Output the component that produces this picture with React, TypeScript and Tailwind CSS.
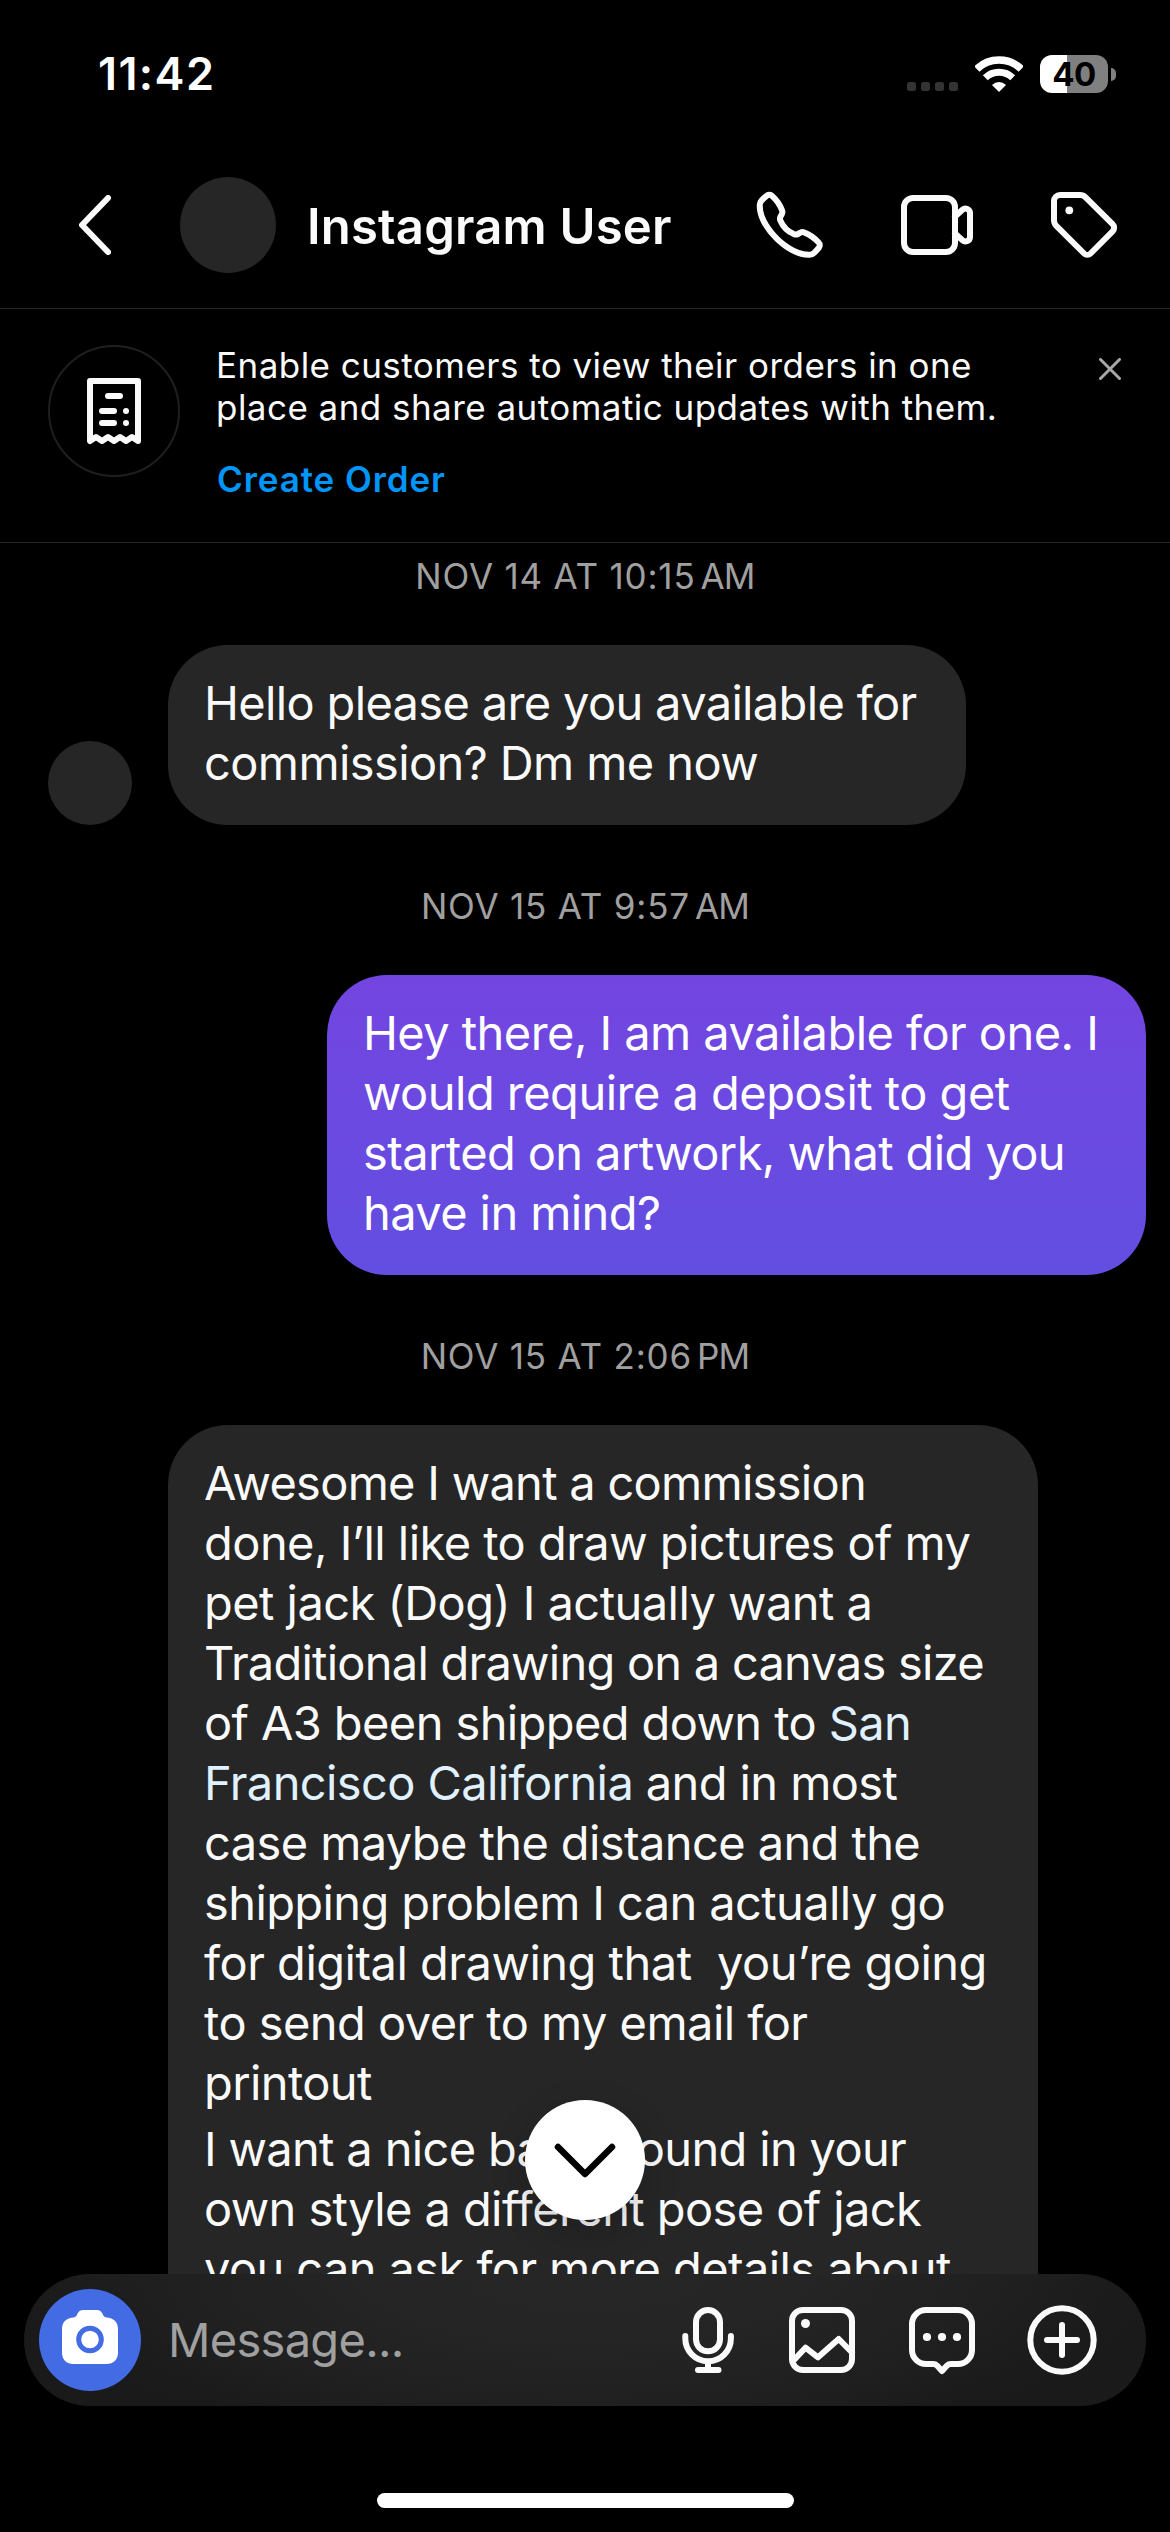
import type { ReactNode } from "react";

type IconProps = { className?: string; children: ReactNode };

function Icon({ className = "", children }: IconProps) {
  return (
    <svg
      viewBox="0 0 72 72"
      className={`h-[72px] w-[72px] shrink-0 ${className}`}
      fill="none"
      stroke="#fafafa"
      strokeWidth="6"
      strokeLinecap="round"
      strokeLinejoin="round"
    >
      {children}
    </svg>
  );
}

function StatusBar() {
  return (
    <div className="flex h-[148px] shrink-0 items-center justify-between pr-[54px] pl-[98px]">
      <span className="text-[45px] leading-[54px] font-semibold tracking-[1.4px] text-white">11:42</span>
      <div className="flex items-center">
        <div className="mt-[25px] mr-[17px] flex gap-[5px]">
          {[0, 1, 2, 3].map((i) => (
            <span key={i} className="h-[9px] w-[9px] rounded-[2.5px] bg-[#333333]" />
          ))}
        </div>
        <svg viewBox="0 0 48 36" className="mr-[17px] h-[36px] w-[48px]" fill="none" stroke="#fff">
          <path d="M1.8 13A32 32 0 0 1 46.2 13" strokeWidth="7.6" />
          <path d="M10.3 21.8A19.8 19.8 0 0 1 37.7 21.8" strokeWidth="7" />
          <path d="M24 36L17 28.9A10 10 0 0 1 31 28.9Z" fill="#fff" stroke="none" />
        </svg>
        <div className="flex h-[38px] w-[68px] items-center justify-center rounded-[12px] bg-[linear-gradient(to_right,#fff_27px,#808080_27px)]">
          <span className="text-[33px] leading-[38px] font-bold tracking-[-0.6px] text-black">40</span>
        </div>
        <span className="ml-[3px] h-[13px] w-[5px] rounded-r-full bg-[#808080]" />
      </div>
    </div>
  );
}

function Header() {
  return (
    <header className="flex h-[161px] shrink-0 items-center border-b border-[#262626] pr-[50px] pb-[6px] pl-[78px]">
      <svg viewBox="0 0 33 60" className="h-[60px] w-[33px] shrink-0" fill="none" stroke="#fafafa" strokeWidth="6" strokeLinecap="round" strokeLinejoin="round">
        <path d="M30 3L4 30L30 57" />
      </svg>
      <div className="ml-[69px] h-24 w-24 shrink-0 rounded-full bg-[#262626]" />
      <h1 className="mt-1 ml-[31px] text-[49px] leading-[60px] font-semibold tracking-[0.2px] whitespace-nowrap text-[#fafafa]">
        Instagram User
      </h1>
      <div className="ml-auto flex gap-[75px]">
        <svg viewBox="0 0 24 24" className="h-[72px] w-[72px]" fill="#fafafa">
          <path d="M18.227 22.912c-4.913 0-9.286-3.627-11.486-5.828C4.486 14.83.731 10.291.921 5.231a3.289 3.289 0 0 1 .908-2.138 17.116 17.116 0 0 1 1.865-1.71 2.307 2.307 0 0 1 3.004.174 13.283 13.283 0 0 1 3.658 5.325 2.551 2.551 0 0 1-.19 1.941l-.455.853a.463.463 0 0 0-.024.387 7.57 7.57 0 0 0 4.077 4.075.455.455 0 0 0 .386-.024l.853-.455a2.548 2.548 0 0 1 1.94-.19 13.278 13.278 0 0 1 5.326 3.658 2.309 2.309 0 0 1 .174 3.003 17.319 17.319 0 0 1-1.71 1.866 3.29 3.29 0 0 1-2.138.91 10.27 10.27 0 0 1-.368.006Zm-13.144-20a.27.27 0 0 0-.167.054A15.121 15.121 0 0 0 3.28 4.47a1.289 1.289 0 0 0-.36.836c-.161 4.301 3.21 8.34 5.235 10.364s6.06 5.403 10.366 5.236a1.284 1.284 0 0 0 .835-.36 15.217 15.217 0 0 0 1.504-1.637.324.324 0 0 0-.047-.41 11.62 11.62 0 0 0-4.457-3.119.545.545 0 0 0-.411.044l-.854.455a2.452 2.452 0 0 1-2.071.116 9.571 9.571 0 0 1-5.189-5.188 2.457 2.457 0 0 1 .115-2.071l.456-.855a.544.544 0 0 0 .043-.41 11.629 11.629 0 0 0-3.118-4.458.36.36 0 0 0-.244-.1Z" />
        </svg>
        <svg viewBox="0 0 24 24" className="h-[72px] w-[72px]" fill="none" stroke="#fafafa" strokeWidth="2" strokeLinecap="round" strokeLinejoin="round">
          <rect x="1" y="3" width="17" height="18" rx="3" />
          <path d="M18 9.146l2.495-2.256A1.5 1.5 0 0 1 23 8.003v7.994a1.5 1.5 0 0 1-2.506 1.113L18 14.854" />
        </svg>
        <Icon>
          <path d="M6 12a6 6 0 0 1 6-6h20a8 8 0 0 1 5.6 2.3l27 26.9a5 5 0 0 1 0 7.1L42.6 64.5a4.6 4.6 0 0 1-6.5 0L8.3 36.9A8 8 0 0 1 6 31.3Z" />
          <circle cx="21.3" cy="21.3" r="3.9" fill="#fafafa" stroke="none" />
        </Icon>
      </div>
    </header>
  );
}

function OrderBanner() {
  return (
    <section className="flex h-[234px] shrink-0 items-start border-b border-[#262626] pr-[49px] pl-[48px]">
      <div className="mt-9 flex h-[132px] w-[132px] shrink-0 items-center justify-center rounded-full border-2 border-[#1f1f1f]">
        <Icon>
          <path d="M12 66V6H60V66L54 62L48 66L42 62L36 66L30 62L24 66L18 62Z" />
          <path d="M30 21H42M24 36H36M24 48H36M48 36H48.01M48 48H48.01" />
        </Icon>
      </div>
      <div className="mt-[35px] ml-9 text-[35px] leading-[42px] whitespace-nowrap text-[#fafafa]">
        <p className="tracking-[0.46px]">
          Enable customers to view their orders in one
          <br />
          place and share automatic updates with them.
        </p>
        <p className="mt-[30px] ml-px font-semibold tracking-[0.9px] text-[#0095f6]">Create Order</p>
      </div>
      <svg viewBox="0 0 22 22" className="mt-[49px] ml-auto h-[22px] w-[22px] shrink-0" fill="none" stroke="#a8a8a8" strokeWidth="3" strokeLinecap="round">
        <path d="M1.5 1.5L20.5 20.5M20.5 1.5L1.5 20.5" />
      </svg>
    </section>
  );
}

function DateLabel({ children, period, className = "" }: { children: ReactNode; period: string; className?: string }) {
  return (
    <div className={`flex h-[42px] justify-center text-[35px] leading-[42px] text-[#a0a0a0] ${className}`}>
      <span className="tracking-[0.8px]">{children}</span>
      <span className="ml-[5px] tracking-[-0.8px]">{period}</span>
    </div>
  );
}

function Line({ children, className = "tracking-[-0.6px]" }: { children: ReactNode; className?: string }) {
  return <span className={`block whitespace-pre ${className}`}>{children}</span>;
}

function Thread() {
  return (
    <main className="relative flex h-[1731px] shrink-0 flex-col overflow-hidden text-[47px] leading-[60px] text-[#fafafa]">
      <DateLabel className="mt-3" period="AM">NOV 14 AT 10:15</DateLabel>
      <div className="mt-12 flex items-end gap-9 pl-12">
        <div className="h-[84px] w-[84px] rounded-full bg-[#262626]" />
        <div className="h-[180px] w-[798px] rounded-[60px] bg-[#262626] pt-[28px] pl-9">
          <Line className="tracking-[-0.66px]">Hello please are you available for</Line>
          <Line>commission? Dm me now</Line>
        </div>
      </div>

      <DateLabel className="mt-[60px]" period="AM">NOV 15 AT 9:57</DateLabel>
      <div className="mt-12 flex justify-end pr-6">
        <div className="h-[300px] w-[819px] rounded-[60px] bg-linear-to-b from-[#7345e0] to-[#624ee1] pt-[28px] pl-9 text-white">
          <Line className="tracking-[-0.56px]">Hey there, I am available for one. I</Line>
          <Line className="tracking-[-0.52px]">would require a deposit to get</Line>
          <Line>started on artwork, what did you</Line>
          <Line>have in mind?</Line>
        </div>
      </div>

      <DateLabel className="mt-[60px]" period="PM">NOV 15 AT 2:06</DateLabel>
      <div className="mt-12 pl-[168px]">
        <div className="h-[1100px] w-[870px] rounded-t-[60px] bg-[#262626] pt-[28px] pl-9">
          <Line className="tracking-[-0.72px]">Awesome I want a commission</Line>
          <Line className="tracking-[-0.54px]">done, I’ll like to draw pictures of my</Line>
          <Line className="tracking-[-0.54px]">pet jack (Dog) I actually want a</Line>
          <Line className="tracking-[-0.76px]">Traditional drawing on a canvas size</Line>
          <Line>
            of A3 been shipped down to <span className="text-[#e0f1ff]">San</span>
          </Line>
          <Line>
            <span className="text-[#e0f1ff]">Francisco California</span> and in most
          </Line>
          <Line>case maybe the distance and the</Line>
          <Line>shipping problem I can actually go</Line>
          <Line className="tracking-[-0.5px]">{"for digital drawing that  you’re going"}</Line>
          <Line className="tracking-[-0.54px]">to send over to my email for</Line>
          <Line>printout</Line>
          <div className="mt-[6px]">
            <Line className="tracking-[-0.67px]">I want a nice background in your</Line>
            <Line>own style a different pose of jack</Line>
            <Line>you can ask for more details about</Line>
          </div>
        </div>
      </div>

      <button className="absolute bottom-[54px] left-[525px] flex h-[120px] w-[120px] items-center justify-center rounded-full bg-white shadow-[0_12px_36px_rgba(0,0,0,0.2)]">
        <svg viewBox="0 0 62 36" className="mt-[2px] h-[36px] w-[62px]" fill="none" stroke="#000" strokeWidth="6.5" strokeLinecap="round" strokeLinejoin="round">
          <path d="M4 4L31 31L58 4" />
        </svg>
      </button>
    </main>
  );
}

function Composer() {
  return (
    <footer className="mx-6 flex h-[132px] shrink-0 items-center rounded-full bg-[#1a1a1a] bg-[radial-gradient(ellipse_540px_170px_at_50%_0%,#262626_0%,#252525_40%,#1f1f1f_80%,#1a1a1a_105%)] pr-12 pl-[15px]">
      <div className="flex h-[102px] w-[102px] shrink-0 items-center justify-center rounded-full bg-[#436be3]">
        <svg viewBox="0 0 56 54" className="-mt-[6px] h-[54px] w-[56px]">
          <path
            fill="#fff"
            d="M11.5 7.5C14 7.3 14.6 5.6 15.6 3.6C16.8 1 18.6 0 21 0H35C37.4 0 39.2 1 40.4 3.6C41.4 5.6 42 7.3 44.5 7.5C51.5 7.7 56 12 56 19V42.5C56 49.5 51.5 54 44.5 54H11.5C4.5 54 0 49.5 0 42.5V19C0 12 4.5 7.7 11.5 7.5Z"
          />
          <circle cx="28" cy="29.5" r="11.3" fill="#fff" stroke="#436be3" strokeWidth="5" />
        </svg>
      </div>
      <span className="ml-[27px] text-[47px] leading-[60px] tracking-[-0.7px] text-[#a0a0a0]">Message...</span>
      <div className="ml-auto flex">
        <Icon>
          <rect x="24" y="6" width="24" height="41.3" rx="12" />
          <path d="M13.3 32V34.5A22.8 22.8 0 0 0 58.9 34.5V32M36 58V66M26 66H46.5" />
        </Icon>
        <Icon className="ml-[42px]">
          <rect x="6" y="6" width="60" height="60" rx="11" />
          <path d="M7 57L19.5 43.7L32 53.3L52.7 35L66 48.5" />
          <circle cx="19.5" cy="19.5" r="4.5" fill="#fafafa" stroke="none" />
        </Icon>
        <Icon className="ml-12">
          <path d="M20 6H52A14 14 0 0 1 66 20V46A14 14 0 0 1 52 60H45C43 60 42 60.5 41 61.5L36 67L31 61.5C30 60.5 29 60 27 60H20A14 14 0 0 1 6 46V20A14 14 0 0 1 20 6Z" />
          <g fill="#fafafa" stroke="none">
            <circle cx="21" cy="33" r="4.1" />
            <circle cx="36" cy="33" r="4.1" />
            <circle cx="51" cy="33" r="4.1" />
          </g>
        </Icon>
        <Icon className="ml-12">
          <circle cx="36" cy="36" r="31.7" />
          <path d="M36 21V51M21 36H51" />
        </Icon>
      </div>
    </footer>
  );
}

export default function App() {
  return (
    <div className="flex h-[2532px] w-[1170px] flex-col overflow-hidden bg-black font-['Inter',sans-serif]">
      <StatusBar />
      <Header />
      <OrderBanner />
      <Thread />
      <Composer />
      <div className="mx-auto mt-[87px] h-[15px] w-[417px] shrink-0 rounded-full bg-white" />
    </div>
  );
}
